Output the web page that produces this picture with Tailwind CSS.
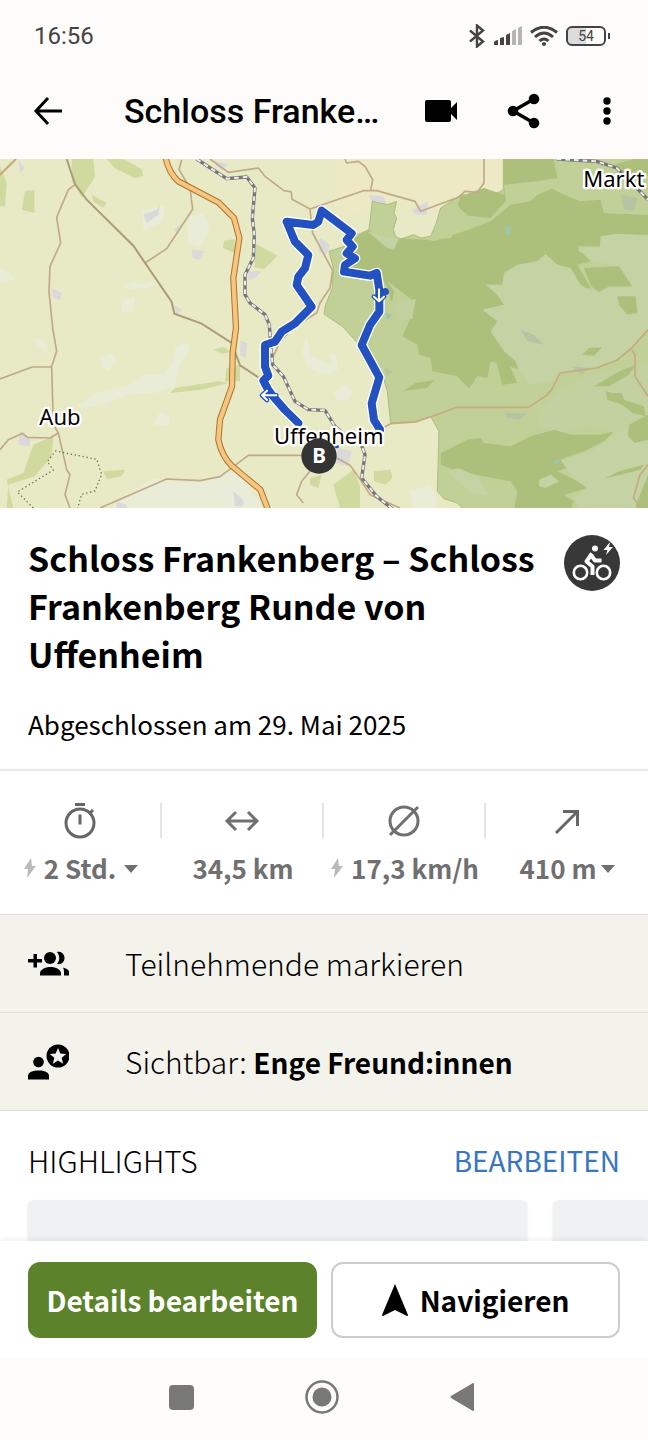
<!DOCTYPE html>
<html lang="de">
<head>
    <meta charset="UTF-8">
    <meta name="viewport" content="width=device-width, initial-scale=1.0">
    <title>Schloss Frankenberg</title>
    <script src="https://cdn.jsdelivr.net/npm/@tailwindcss/browser@4"></script>
</head>
<body class="bg-white text-black font-['Noto_Sans_CJK_SC',sans-serif] min-h-screen flex flex-col">
    <!-- Status bar -->
    <div class="bg-[#fdfcfa] h-18 pl-[34px] pr-[38px] flex items-center justify-between font-[Roboto,sans-serif] text-[#444]">
        <span class="text-2xl">16:56</span>
        <div class="flex items-center gap-2">
            <svg class="w-[18px] h-6" viewBox="0 0 18 24" fill="none" stroke="#444" stroke-width="2.400"><path d="M2 6.500 15 17.500 9 22.500V1.500L15 6.500 2 17.500"/></svg>
            <svg class="w-7 h-5" viewBox="0 0 28 20"><path fill="#444" d="M0 16q2-2 4-2v5H0zM6 12l4-1v8H6zM12 9l4-2v12h-4z"/><path fill="#b5b5b5" d="M18 5l4-2v16h-4zM24 2l4-2v19h-4z"/></svg>
            <svg class="w-7 h-5" viewBox="0 0 28 20" fill="none" stroke="#444" stroke-width="3"><path d="M1 6.500Q14-4 27 6.500M5 11q9-8 18 0M9.500 15q4.500-4 9 0"/><circle cx="14" cy="18" r="2" fill="#444" stroke="none"/></svg>
            <div class="flex items-center gap-0.5">
                <span class="w-10 h-5 rounded-md border-2 border-[#444] bg-linear-to-r from-[#dcdcdc] from-50% to-transparent to-50% text-sm leading-4 text-center">54</span>
                <span class="w-0.5 h-1.5 bg-[#444]"></span>
            </div>
        </div>
    </div>

    <!-- App bar -->
    <header class="bg-[#fdfcfa] h-[87px] pl-7 pr-[21px] pb-2.5 flex items-center">
        <button aria-label="Zurück"><svg class="w-10 h-10" viewBox="0 0 40 40" fill="none" stroke="#000" stroke-width="3"><path d="M34 20H8M20 7 8 20l12 13"/></svg></button>
        <h1 class="ml-14 flex-1 min-w-0 truncate font-[Roboto,sans-serif] font-medium text-[34px] leading-10">Schloss Franke…</h1>
        <div class="flex items-center">
            <button aria-label="Video" class="mr-11"><svg class="w-9 h-9" viewBox="0 0 36 36"><path d="M4 7h22q2 0 2 2v6l6-6v18l-6-6v6q0 2-2 2H4q-2 0-2-2V9q0-2 2-2z"/></svg></button>
            <button aria-label="Teilen" class="mr-11"><svg class="w-10 h-10" viewBox="0 0 40 40"><path d="M31 8 10 20l21 12" fill="none" stroke="#000" stroke-width="3.500"/><circle cx="31" cy="8" r="5.300"/><circle cx="10" cy="20" r="5.300"/><circle cx="31" cy="32" r="5.300"/></svg></button>
            <button aria-label="Mehr"><svg class="w-10 h-10" viewBox="0 0 40 40"><circle cx="20" cy="10" r="3.700"/><circle cx="20" cy="20" r="3.700"/><circle cx="20" cy="30" r="3.700"/></svg></button>
        </div>
    </header>

    <!-- Map -->
    <svg class="block w-full bg-[#e8e9c5]" viewBox="0 3 1944 1047" role="img" aria-label="Karte">
        <rect y="3" width="1944" height="1047" fill="#e8e9c5"/>
        <!-- Meadows and small woods -->
        <g fill="#e9ecd6">
            <path d="M365 385l40-15 15 10 50-15-10 20-60 10zM365 430l40-15-5 45-35 5zM300 600l40-15 10 30-25 25-22-15zM560 180l50-15 20 50-30 50-35-10zM425 160l70-20-5 50-60 30zM480 760l30 15-5 30-45-5zM460 960l90 15 180-40 20 60 40 55H330zM0 330l30 15 10 20-40 10zM100 540l40 10 5 40-30-25zM525 565l35-10 10 20-30 40-15 70-60 20-80 5-60 25-70 15-25-5 60-40 100-25 40-30 60 0 30-40zM920 540l10 50 50 25 15 0-5-30 20 10 5 40-40 15-50-20-20-50zM1230 1000l60-20 20 40 0 30h-70zM1000 700l40-20 20 20-15 30-35-5z"/>
        </g>
        <path fill="#ece9c4" d="M1010 3h500v95l-90 10-110 50-60-20-130 0-100 50-20-20z"/>
        <g fill="#d0da9f">
            <path d="M215 3h65l5 55-40 60-30-50zM320 3h50l55 30 5 20-25 8-60-30zM0 25l20 50-5 70-15 0zM75 100l28-5 0 70-38-10zM275 110l45 25-10 15-30-20zM672 248l32-5 0 42-35-15zM768 258l65 35-40 40-30-5zM100 860l60-25-5 60-50 60-80 25-5 70H40L20 965l50-20zM310 940l65-5-10 20-45 8zM640 575l30-8 25 15-30 5zM680 630l40-10 0 50-45 0zM1122 940l50-5 5 25-20 20-35-10zM1000 980l60-45 20 50 0 65h-60zM930 960l35-10-10 40-25-10zM510 705l15-15 130-20 30 5-80 20z"/>
        </g>
        <g fill="#d9d9dc">
            <path d="M430 170l40-15 10-15-5 30-35 25zM575 275l38 5-15 25-20-5zM520 215l20-15-5 30zM155 390l30 15-5 20-20-5zM520 440l25 15-15 15zM745 340l40 0-20 20-20 5zM722 548l20 8-5 45-17-10zM55 5l20 25-15 15zM635 5l50 15-20 20zM60 820l30 20 0 25-35-5zM700 1000l30 25 0 20h-25zM350 1030l30 10v10h-30zM1015 870l40 10-10 45-40-10zM960 240l30 20-10 30-25-10zM1105 110l45 5 10 22-40 5zM1235 155l50-25-5 40-30 0z"/>
        </g>
        <!-- Nature park -->
        <g transform="translate(972 0)">
            <path fill="#c0d097" stroke="#a8bf7a" stroke-width="3" d="M538 0V95L520 105 460 108 410 112 350 150 335 200 320 235 290 240 270 230 230 243 215 235 208 215 218 180 210 165 218 130 190 140 145 130 135 215 90 235 70 262 15 280 28 330 25 390 5 440 0 468 55 505 110 565 155 630 175 650 190 700 200 795 275 790 320 775 345 820 340 1000 360 1022 400 1035 420 1055H980V0Z"/>
            <path fill="#adc07b" d="M538 3H690L700 60 680 90 720 110 770 130 830 125 840 165 972 170V230L830 235 835 265 760 265 800 310 760 320 800 390 700 400 600 640 540 620 500 610 490 660 460 655 435 692 400 655 325 640 320 600 285 590 280 560 235 535 260 480 275 430 200 430 195 395 160 340 78 330 100 300 80 260 90 240 135 215 160 240 200 270 220 240 310 245 380 240 430 170 400 145 410 115 480 90 540 110Z"/>
            <path fill="#c0d097" d="M540 80L640 70 700 60 690 90 640 110 620 130 560 140 500 190 420 220 330 250 300 242 325 235 350 160 400 130 410 170 500 180 545 130ZM690 3H972V170L840 165 830 125 760 50 700 60ZM270 430l-80-60 20 30-10 60 35 25 20 0z"/>
            <path fill="#adc07b" d="M870 20l60-17h42v50l-40 20-50-30z"/>
            <path fill="#c5d2a3" d="M485 380L535 380 540 345 580 320 640 310 665 288 700 320 740 330 770 380 800 400 850 390 972 385V520L920 570 870 610 800 630 720 640 690 670 620 680 585 640 575 610 540 580 500 520 520 490 475 455 540 440 520 410ZM830 235l50-8 92 5v165l-80-15-30-60-65-15-20-20-15-10 5-10 60 5zM770 270l30-5 20 20-30 5zM130 220l50 15 45 5-15 35-20-5z"/>
            <path fill="#c3d1a0" d="M650 760L700 700 760 670 830 640 972 620V770L880 830 780 800 700 830 640 800ZM200 440l75-18-10 60-30 5z"/>
            <path fill="#adc07b" d="M350 885L430 845 470 840 480 855 560 865 620 835 690 815 740 830 830 830 870 820 840 850 780 880 720 900 760 920 700 940 760 970 790 990 720 1010 750 1030 740 1055H570L580 1000 560 970 480 955 400 940 350 920Z"/>
            <path fill="#c5d2a3" d="M710 905L800 880 870 830 940 790 972 780V1055H770L750 1020 790 990 740 950ZM645 965l35-15 25 20-40 20-20-5zM370 940l30-10 60 25 40 60-60-10z"/>
            <path fill="#adc07b" d="M780 330l105-5 40 60-70 0-30 18-25-20zM880 415h55l5 50-30 5-25-30zM775 590l20-20 40-2-25 25zM515 605l35 0 30 70-45 5zM235 700l40-25 55-8-20 22zM810 685l75-45 50-20-20 30-60 35zM845 700l20 5 30 0 5 20 60 20 5 30-40-10-30-25-45-15zM915 800l57-30v75l-40 10-20-20zM845 960l40-20 75-20-10 15-100 25zM940 1030l32-80v105h-40z"/>
            <g fill="#b7c4a3"><path d="M590 515l40 15 30 30-50-10zM540 765l70 0-20 20-40-5zM740 625l60 5-30 20zM890 110l50 10-10 40-30-5zM180 630l25 10-15 15z"/></g>
            <path fill="#9cc6b4" d="M545 205h15l-5 25h-10zM185 465l20 5-15 15zM685 910l20-5 5 5-15 8zM595 60h12v8z"/>
        </g>
        <!-- Minor roads -->
        <g fill="none" stroke="#c0aa87" stroke-width="5" stroke-linejoin="round">
            <path d="M225 80L205 95 170 178 182 255 150 325 147 400 158 510 170 580 155 625 160 800 175 825 150 840 82 838 68 826 25 845 0 875M0 663L97 627H155M175 825L200 935 210 950 195 1010 210 1050M435 315L500 272 578 154 570 90 537 35 545 5M300 1050L500 963 600 968 660 956 745 892H920M630 3L685 43 775 30 795 55 852 98 874 102 876 124 930 153 1090 98 1130 98 1245 130 1262 160 1375 118 1395 100 1432 103 1452 75V3M1035 3L1040 15 1075 10 1095 25 1118 65 1112 98M930 155L938 225 998 338 990 390 960 435 950 465 885 505 840 550 818 600M930 940L905 970 890 1010 910 1035"/>
            <path stroke="#c5ab7e" d="M1152 808L1172 797 1247 792 1297 775 1370 748H1585L1640 712 1655 695 1680 645 1790 630 1850 607 1895 570 1944 515M1895 575L1905 590V655L1944 715M1944 920L1920 950 1900 1020 1925 1050M1010 900L1050 922 1078 960 1110 1010 1200 1050"/>
        </g>
        <g fill="none" stroke="#ad9c78" stroke-width="6">
            <path d="M200 3L225 78 260 125 400 263 515 432 523 467 605 497 695 555 720 622 775 658"/>
            <path stroke="#c5aa78" d="M0 50 48 3"/>
        </g>
        <!-- Railway -->
        <g fill="none" stroke-linejoin="round">
            <g stroke="#777" stroke-width="10">
                <path d="M590 3L680 62 740 57 765 90 757 180 763 230 760 300 735 350V410L750 435 795 470 808 500 812 560 818 620 850 655 885 730 925 755 975 757 1005 805 1040 835 1080 850 1095 890 1085 960 1130 1015 1180 1055"/>
                <path d="M1670 3L1790 10 1850 30 1900 80 1944 125"/>
            </g>
            <g stroke="#eee" stroke-width="6" stroke-dasharray="14 12">
                <path d="M590 3L680 62 740 57 765 90 757 180 763 230 760 300 735 350V410L750 435 795 470 808 500 812 560 818 620 850 655 885 730 925 755 975 757 1005 805 1040 835 1080 850 1095 890 1085 960 1130 1015 1180 1055"/>
                <path d="M1670 3L1790 10 1850 30 1900 80 1944 125"/>
            </g>
        </g>
        <!-- Motorway -->
        <g fill="none" stroke-linejoin="round">
            <path stroke="#a8743a" stroke-width="19" d="M497 0q10 45 38 70l120 63 47 47 16 60-18 120 8 150-10 75-2 100-36 100-5 60q10 50 42 80l84 70 23 60"/>
            <path stroke="#f7c57c" stroke-width="13" d="M497 0q10 45 38 70l120 63 47 47 16 60-18 120 8 150-10 75-2 100-36 100-5 60q10 50 42 80l84 70 23 60"/>
        </g>
        <path fill="none" stroke="#5d7c47" stroke-width="4" stroke-dasharray="4 8" d="M100 1050l-48-48 108-66-18-25 25-32 123 25 15 45-20 50-40 10 -15 50"/>
        <!-- Route -->
        <g fill="none" stroke-linejoin="round" stroke-linecap="round">
            <path stroke="#fff" stroke-width="32" d="M895 795L855 756 820 716 805 696 790 668 805 653 795 626V561L825 551 845 521 885 496 935 446 890 381 895 356 915 331 925 291 885 251 860 191 940 201 955 191 965 158 1055 226 1040 246 1058 266 1040 286 1065 301 1035 321 1032 341 1110 353 1130 345 1138 396V461L1110 501 1085 561 1138 658 1115 736 1122 786 1140 815"/>
            <path stroke="#2351bf" stroke-width="24" d="M895 795L855 756 820 716 805 696 790 668 805 653 795 626V561L825 551 845 521 885 496 935 446 890 381 895 356 915 331 925 291 885 251 860 191 940 201 955 191 965 158 1055 226 1040 246 1058 266 1040 286 1065 301 1035 321 1032 341 1110 353 1130 345 1138 396V461L1110 501 1085 561 1138 658 1115 736 1122 786 1140 815"/>
            <path stroke="#2351bf" stroke-width="22" d="M1138 408l18-7"/>
            <path stroke="#2351bf" stroke-width="14" d="M1137 394v36M1122 416l15 14 15-14M829 712h-42M801 698l-15 14 15 14"/>
            <path stroke="#fff" stroke-width="6" d="M1137 394v36M1122 416l15 14 15-14M829 712h-42M801 698l-15 14 15 14"/>
            <path stroke="#2351bf" stroke-width="10" d="M1008 866h4"/>
        </g>
        <!-- Labels and end marker -->
        <g font-family="Noto Sans, sans-serif" font-size="66" fill="#000" stroke="#fff" stroke-width="14" stroke-linejoin="round" paint-order="stroke">
            <text x="118" y="800">Aub</text>
            <text x="822" y="858">Uffenheim</text>
            <text x="1750" y="86">Markt</text>
        </g>
        <circle cx="957" cy="894" r="53" fill="#333"/>
        <text x="957" y="916" text-anchor="middle" font-family="Noto Sans, sans-serif" font-size="62" font-weight="700" fill="#fff">B</text>
    </svg>

    <!-- Tour title -->
    <section class="px-7 pt-[26px] pb-7 border-b-2 border-[#e8e8e8]">
        <div class="flex items-start justify-between">
            <h2 class="text-[34px] leading-[48px] font-bold">Schloss Frankenberg – Schloss Frankenberg Runde von Uffenheim</h2>
            <svg class="mt-px w-14 h-14 shrink-0" viewBox="0 0 56 56" fill="none" stroke="#fff" stroke-width="2.600">
                <circle cx="28" cy="28" r="28" fill="#383838" stroke="none"/>
                <circle cx="16.500" cy="37.500" r="6.700"/><circle cx="39.500" cy="37.500" r="6.700"/>
                <circle cx="31" cy="13.500" r="3" fill="#fff" stroke="none"/>
                <path stroke-width="4" stroke-linejoin="round" d="m28 18.500-5.500 8 6 5V40M27 20l4 5.500h6.500"/>
                <path fill="#fff" stroke="none" d="m46 7-6.500 8h4L42 20l7-8h-4z"/>
            </svg>
        </div>
        <p class="mt-[29px] text-[26px] leading-[34px]">Abgeschlossen am 29. Mai 2025</p>
    </section>

    <!-- Stats -->
    <section class="grid grid-cols-4 pt-8 pb-7 text-[#707070] font-bold text-[26px] leading-9">
        <button class="flex flex-col items-center gap-3">
            <span class="h-[35px] w-full flex items-center justify-center border-r-2 border-[#e4e4e4]">
                <svg class="w-9 h-10" viewBox="0 0 36 40" fill="none" stroke="#666" stroke-width="3"><circle cx="18" cy="22" r="14"/><path d="M13 3.500h10M18 13.500v10M28 12l3-3"/></svg>
            </span>
            <span class="flex items-center gap-2"><svg class="w-3 h-5" viewBox="0 0 12 20"><path fill="#bbb" d="M7 0 0 11h4L3 20l9-12H8z"/></svg>2 Std.<svg class="w-3.5 h-2.5" viewBox="0 0 14 10"><path fill="#707070" d="M0 2h14L7 10z"/></svg></span>
        </button>
        <div class="flex flex-col items-center gap-3">
            <span class="h-[35px] w-full flex items-center justify-center border-r-2 border-[#e4e4e4]">
                <svg class="w-9 h-9" viewBox="0 0 36 36" fill="none" stroke="#707070" stroke-width="3"><path d="M3 18h30M12 9l-9 9 9 9M24 9l9 9-9 9"/></svg>
            </span>
            <span>34,5 km</span>
        </div>
        <div class="flex flex-col items-center gap-3">
            <span class="h-[35px] w-full flex items-center justify-center border-r-2 border-[#e4e4e4]">
                <svg class="w-9 h-9" viewBox="0 0 36 36" fill="none" stroke="#707070" stroke-width="3"><circle cx="18" cy="18" r="14"/><path d="M4 32 32 4"/></svg>
            </span>
            <span class="flex items-center gap-2"><svg class="w-3 h-5" viewBox="0 0 12 20"><path fill="#bbb" d="M7 0 0 11h4L3 20l9-12H8z"/></svg>17,3 km/h</span>
        </div>
        <button class="flex flex-col items-center gap-3">
            <span class="h-[35px] flex items-center">
                <svg class="w-9 h-9" viewBox="0 0 36 36" fill="none" stroke="#666" stroke-width="3"><path d="M7 30 28 9M14 8.500h14.500V23"/></svg>
            </span>
            <span class="flex items-center gap-1">410 m<svg class="w-3.5 h-2.5" viewBox="0 0 14 10"><path fill="#707070" d="M0 2h14L7 10z"/></svg></span>
        </button>
    </section>

    <!-- Settings rows -->
    <div class="bg-[#f3f3eb] text-[30px] font-light border-t border-[#dededa]">
        <button class="w-full h-[98px] px-7 flex items-center gap-14 border-b border-[#dededa]">
            <svg class="w-[41px] h-9" viewBox="0 0 41 36"><path d="M5.500 8H9v5h5v3.500H9v5H5.500v-5H0V13h5.500z"/><circle cx="22" cy="12" r="6"/><path d="M12 29.500v-2c0-4 5-6.500 10.500-6.500S33 23.500 33 27.500v2zM29 6c4-.8 7.500 2 7.500 6S33 18.800 29 18c3-4 3-8 0-12zM35 21.500c4 1 6.500 3 6.500 6v2H36v-2c0-2.500 0-4-1-6z"/></svg>
            <span>Teilnehmende markieren</span>
        </button>
        <button class="w-full h-[98px] px-7 flex items-center gap-14 border-b border-[#dededa]">
            <svg class="w-[41px] h-9" viewBox="0 0 41 36"><circle cx="10.500" cy="18" r="5.300"/><path d="M0 35.500V32c0-4 5-5.500 10.500-5.500S21 28 21 32v3.500z"/><circle cx="30" cy="12" r="11.500"/><path fill="#f3f3eb" d="m30 4 2.300 5.500 5.900.5-4.500 3.800 1.400 5.900-5.100-3.200-5.100 3.200 1.400-5.900-4.500-3.800 5.900-.5z"/></svg>
            <span>Sichtbar: <b class="font-bold text-[28px]">Enge Freund:innen</b></span>
        </button>
    </div>

    <!-- Highlights -->
    <section class="pt-[29px] flex-1 flex flex-col overflow-hidden">
        <div class="px-7 flex items-center justify-between leading-10">
            <h3 class="font-light text-[30px]">HIGHLIGHTS</h3>
            <a href="#" class="text-[#3776c1] text-[28px]">BEARBEITEN</a>
        </div>
        <div class="mt-5 pl-7 flex-1 min-h-[39px] flex gap-[26px]">
            <div class="w-[499px] shrink-0 bg-[#f0f1f2] rounded-t-md shadow-sm"></div>
            <div class="flex-1 bg-[#f0f1f2] rounded-tl-md shadow-sm"></div>
        </div>
    </section>

    <!-- Actions -->
    <div class="relative bg-white px-7 pt-[21px] pb-5 grid grid-cols-2 gap-3.5 text-[28px] font-bold shadow-[0_-2px_6px_rgba(0,0,0,0.06)]">
        <button class="h-[76px] rounded-xl bg-[#5c832b] text-white whitespace-nowrap">Details bearbeiten</button>
        <button class="h-[76px] rounded-xl border-2 border-[#ccc] flex items-center justify-center gap-3">
            <svg class="w-[26px] h-8" viewBox="0 0 26 32"><path d="M13 0 26 31q0 1-1 1l-12-6-12 6q-1 0-1-1z"/></svg>Navigieren
        </button>
    </div>

    <!-- System navigation -->
    <nav class="bg-[#fdfcfa] h-[82px] pl-[161px] pr-[166px] pb-1 flex items-center justify-between">
        <button aria-label="Übersicht"><svg class="w-10 h-10" viewBox="0 0 40 40"><rect x="8" y="8" width="25" height="25" rx="4" fill="#787876"/></svg></button>
        <button aria-label="Start"><svg class="w-10 h-10" viewBox="0 0 40 40"><circle cx="20" cy="20" r="15.500" fill="none" stroke="#787876" stroke-width="2.500"/><circle cx="20" cy="20" r="9.500" fill="#787876"/></svg></button>
        <button aria-label="Zurück"><svg class="w-10 h-10" viewBox="0 0 40 40"><path d="M9 19 31 6q1 0 1 1v26q0 1-1 1L9 21q-1-1 0-2z" fill="#787876"/></svg></button>
    </nav>
</body>
</html>
